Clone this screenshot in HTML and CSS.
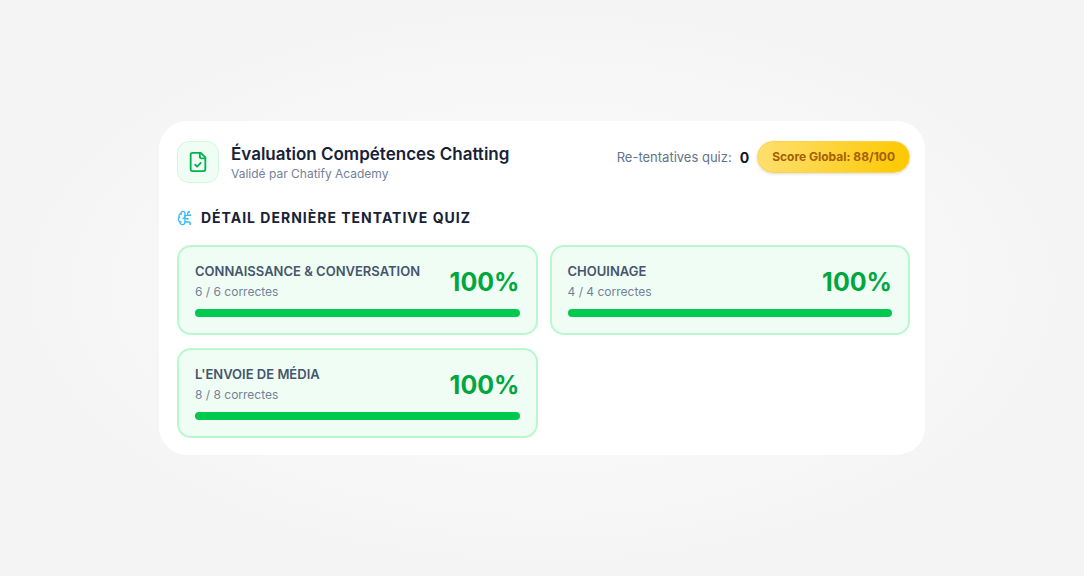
FILE: index.html
```html
<!DOCTYPE html>
<html lang="fr">
<head>
    <meta charset="UTF-8">
    <meta name="viewport" content="width=device-width, initial-scale=1.0">
    <title>Évaluation Compétences Chatting</title>
    <link rel="stylesheet" href="styles.css">
</head>
<body>
    <main class="card">
        <header class="card-header">
            <div class="heading">
                <div class="heading-icon">
                    <svg width="22" height="22" viewBox="0 0 24 24" fill="none" stroke="currentColor" stroke-width="2" stroke-linecap="round" stroke-linejoin="round">
                        <path d="M15 2H6a2 2 0 0 0-2 2v16a2 2 0 0 0 2 2h12a2 2 0 0 0 2-2V7Z"/>
                        <path d="M14 2v4a2 2 0 0 0 2 2h4"/>
                        <path d="m9 15 2 2 4-4"/>
                    </svg>
                </div>
                <div>
                    <h1>Évaluation Compétences Chatting</h1>
                    <p class="subtitle">Validé par Chatify Academy</p>
                </div>
            </div>
            <div class="summary">
                <span class="retries">Re-tentatives quiz: <strong>0</strong></span>
                <span class="score-badge">Score Global: 88/100</span>
            </div>
        </header>

        <h2>
            <svg width="16" height="16" viewBox="0 0 24 24" fill="none" stroke="currentColor" stroke-width="2" stroke-linecap="round" stroke-linejoin="round">
                <path d="M12 5a3 3 0 1 0-5.997.125 4 4 0 0 0-2.526 5.77 4 4 0 0 0 .556 6.588A4 4 0 1 0 12 18Z"/>
                <path d="M9 13a4.500 4.500 0 0 0 3-4"/>
                <path d="M6.003 5.125A3 3 0 0 0 6.401 6.500"/>
                <path d="M3.477 10.896a4 4 0 0 1 .585-.396"/>
                <path d="M6 18a4 4 0 0 1-1.967-.516"/>
                <path d="M12 13h4"/>
                <path d="M12 18h6a2 2 0 0 1 2 2v1"/>
                <path d="M12 8h8"/>
                <path d="M16 8V5a2 2 0 0 1 2-2"/>
                <circle cx="16" cy="13" r=".5"/>
                <circle cx="18" cy="3" r=".5"/>
                <circle cx="20" cy="21" r=".5"/>
                <circle cx="20" cy="8" r=".5"/>
            </svg>
            Détail dernière tentative quiz
        </h2>

        <section class="results">
            <article class="result">
                <div class="result-top">
                    <div>
                        <h3>Connaissance &amp; Conversation</h3>
                        <p>6 / 6 correctes</p>
                    </div>
                    <span class="percent">100%</span>
                </div>
                <div class="bar"><div class="bar-fill" style="width: 100%"></div></div>
            </article>
            <article class="result">
                <div class="result-top">
                    <div>
                        <h3>Chouinage</h3>
                        <p>4 / 4 correctes</p>
                    </div>
                    <span class="percent">100%</span>
                </div>
                <div class="bar"><div class="bar-fill" style="width: 100%"></div></div>
            </article>
            <article class="result">
                <div class="result-top">
                    <div>
                        <h3>L'envoie de média</h3>
                        <p>8 / 8 correctes</p>
                    </div>
                    <span class="percent">100%</span>
                </div>
                <div class="bar"><div class="bar-fill" style="width: 100%"></div></div>
            </article>
        </section>
    </main>
</body>
</html>
```

FILE: styles.css
```css
* {
    box-sizing: border-box;
}
body {
    margin: 0;
    min-height: 100vh;
    display: flex;
    align-items: center;
    justify-content: center;
    font-family: Inter, "Liberation Sans", sans-serif;
    color: #172238;
    background: radial-gradient(ellipse closest-side, #fefefe, #f4f4f4);
}
h1, h2, h3, p {
    margin: 0;
}
svg {
    display: block;
    flex: none;
}
.card {
    width: 100%;
    max-width: 766px;
    padding: 20px 15px 17px 18px;
    border-radius: 28px;
    background: white;
}
.card-header {
    display: flex;
    justify-content: space-between;
    align-items: flex-start;
    gap: 16px;
}
.heading {
    display: flex;
    align-items: center;
    gap: 12px;
}
.heading-icon {
    display: flex;
    align-items: center;
    justify-content: center;
    width: 42px;
    height: 42px;
    border: 1px solid #d0f8dd;
    border-radius: 12px;
    background: #f0fdf4;
    color: #00b34a;
}
h1 {
    font-size: 17px;
    line-height: 24px;
    font-weight: 600;
}
.subtitle {
    font-size: 12px;
    line-height: 16px;
    color: #72829a;
}
.summary {
    display: flex;
    align-items: center;
    gap: 8px;
}
.retries {
    display: flex;
    align-items: center;
    gap: 8px;
    font-size: 13px;
    color: #62748e;
}
.retries strong {
    font-size: 14px;
    font-weight: 700;
    color: #0f172b;
}
.score-badge {
    padding: 0 14px;
    border: 1px solid #fdd444;
    border-radius: 16px;
    font-size: 12px;
    line-height: 30px;
    font-weight: 700;
    color: #a65f00;
    background: linear-gradient(to right, #ffdf70, #fcc800);
    box-shadow: 0 1px 3px rgba(0,0,0,0.15);
}
h2 {
    display: flex;
    align-items: center;
    gap: 8px;
    margin: 24px 0 16px;
    font-size: 14px;
    line-height: 22px;
    font-weight: 700;
    letter-spacing: 1px;
    text-transform: uppercase;
}
h2 svg {
    color: #38bdf8;
}
.results {
    display: grid;
    grid-template-columns: 1fr 1fr;
    gap: 13px 12px;
}
.result {
    padding: 14px 16px 16px;
    border: 2px solid #b9f8cf;
    border-radius: 14px;
    background: #f0fdf4;
}
.result-top {
    display: flex;
    justify-content: space-between;
    align-items: center;
    margin-bottom: 6px;
}
h3 {
    font-size: 13px;
    line-height: 20px;
    font-weight: 600;
    text-transform: uppercase;
    color: #45556c;
}
.result p {
    font-size: 12px;
    line-height: 22px;
    color: #72829a;
}
.percent {
    font-size: 25px;
    line-height: 32px;
    font-weight: 700;
    color: #00a63e;
}
.bar {
    height: 8px;
    border-radius: 4px;
    background: #dcfce7;
}
.bar-fill {
    height: 100%;
    border-radius: 4px;
    background: #00c950;
}
@media (max-width: 640px) {
    .card-header {
        flex-direction: column;
    }
    .results {
        grid-template-columns: 1fr;
    }
}
```
